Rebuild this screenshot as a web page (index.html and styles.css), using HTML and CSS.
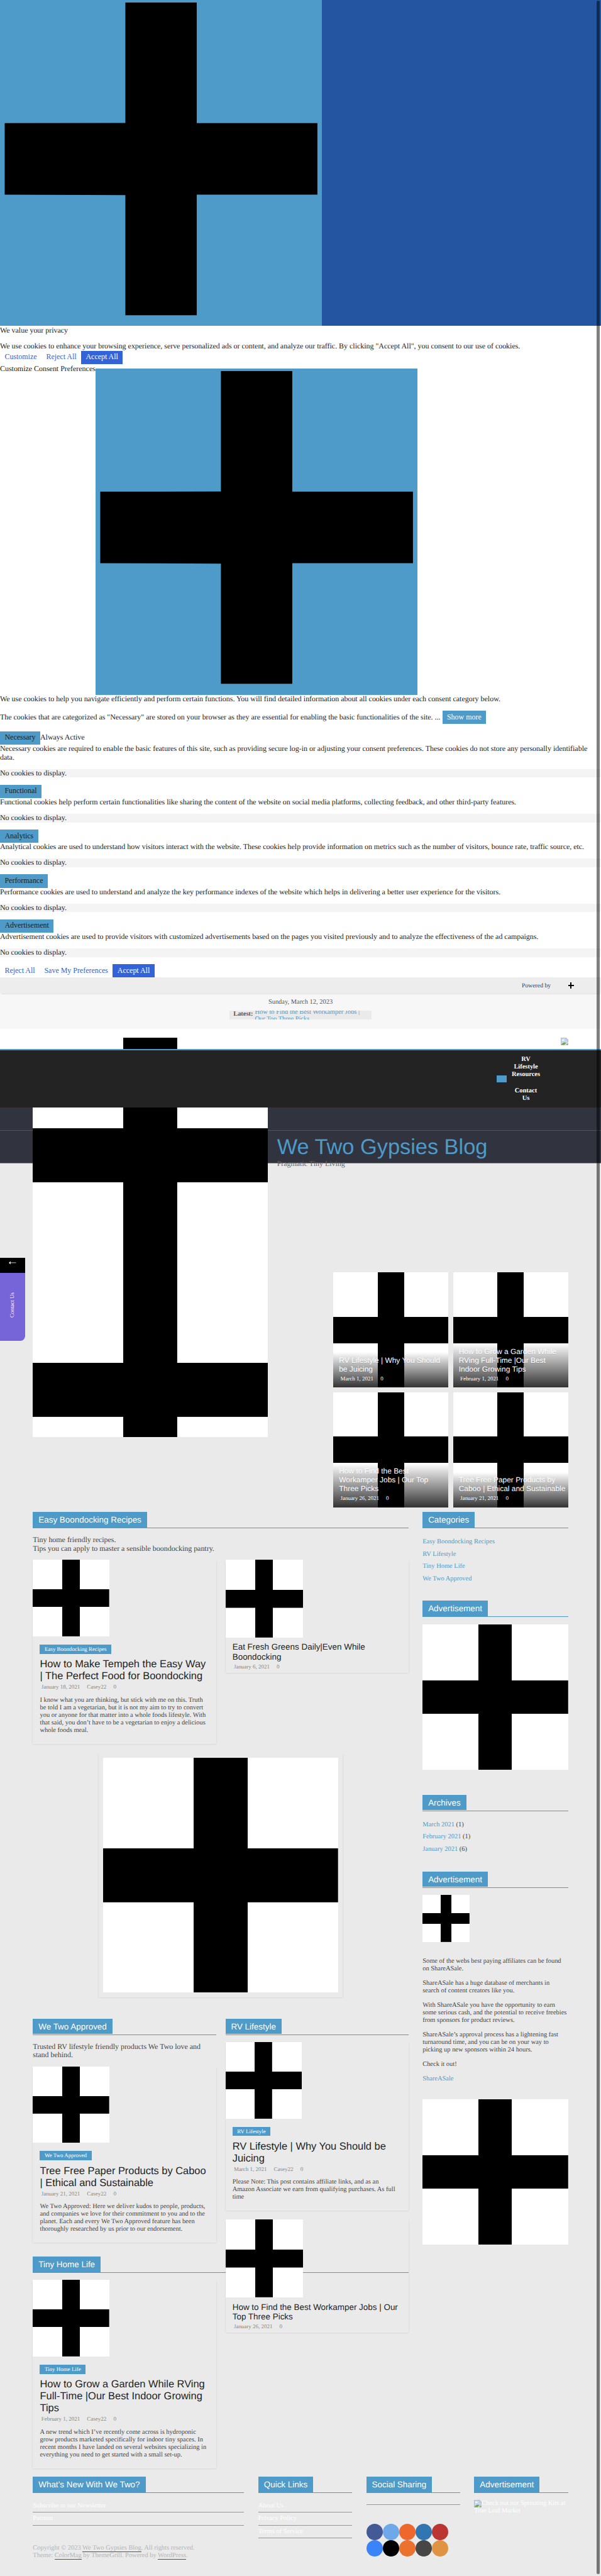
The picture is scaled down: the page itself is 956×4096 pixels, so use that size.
FILE: index.html
```html
<!DOCTYPE html>
<html lang="en">
<head>
<meta charset="utf-8">
<title>We Two Gypsies Blog</title>
<link rel="stylesheet" href="styles.css">
</head>
<body>
<svg width="0" height="0" class="defs">
  <symbol id="plus" viewBox="0 0 686 694"><path d="M267 5h152v257h257v152H419v257H267V415L10 414V262l257-.5z"/></symbol>
  <symbol id="broken" viewBox="0 0 16 16">
    <path d="M.5.5h11l4 4V9l-7 6.5h-8z" fill="#c6d6f5" stroke="#a9a9a9"/>
    <path d="M11.500.5v4h4z" fill="#fff" stroke="#a9a9a9"/>
    <path d="M2.500 6.300c0-2 1.500-1.800 2-2.300 1-1.200 2.400 0 2.300.8 1.200 0 1.200 1.500.2 1.500z" fill="#fff"/>
    <path d="M1 15c2-3.500 4.500-5 7-5 1.500 0 2.500.4 3.200 1L7.500 15z" fill="#6dac42"/>
    <path d="M15.500 11.500V15.500H11z" fill="#6dac42" stroke="#a9a9a9" stroke-width=".6"/>
  </symbol>
</svg>
<div class="page">
  <section class="revisit"><svg class="plus-tile"><use href="#plus"/></svg></section>

  <section class="consent">
    <p class="c-title">We value your privacy</p>
    <p class="c-intro">We use cookies to enhance your browsing experience, serve personalized ads or content, and analyze our traffic. By clicking "Accept All", you consent to our use of cookies.</p>
    <div class="btns"><button>Customize</button><button>Reject All</button><button class="solid">Accept All</button></div>
    <div class="pref-head"><span>Customize Consent Preferences</span><svg class="plus-tile"><use href="#plus"/></svg></div>
    <p class="c-line">We use cookies to help you navigate efficiently and perform certain functions. You will find detailed information about all cookies under each consent category below.</p>
    <div class="more"><span>The cookies that are categorized as "Necessary" are stored on your browser as they are essential for enabling the basic functionalities of the site. ... </span><button class="blue light">Show more</button></div>

    <div class="acc"><div class="acc-h"><button class="blue">Necessary</button><span>Always Active</span></div>
      <p>Necessary cookies are required to enable the basic features of this site, such as providing secure log-in or adjusting your consent preferences. These cookies do not store any personally identifiable<br>data.</p><div class="none">No cookies to display.</div></div>
    <div class="acc"><div class="acc-h"><button class="blue">Functional</button></div>
      <p>Functional cookies help perform certain functionalities like sharing the content of the website on social media platforms, collecting feedback, and other third-party features.</p><div class="none">No cookies to display.</div></div>
    <div class="acc"><div class="acc-h"><button class="blue">Analytics</button></div>
      <p>Analytical cookies are used to understand how visitors interact with the website. These cookies help provide information on metrics such as the number of visitors, bounce rate, traffic source, etc.</p><div class="none">No cookies to display.</div></div>
    <div class="acc"><div class="acc-h"><button class="blue">Performance</button></div>
      <p>Performance cookies are used to understand and analyze the key performance indexes of the website which helps in delivering a better user experience for the visitors.</p><div class="none">No cookies to display.</div></div>
    <div class="acc"><div class="acc-h"><button class="blue">Advertisement</button></div>
      <p>Advertisement cookies are used to provide visitors with customized advertisements based on the pages you visited previously and to analyze the effectiveness of the ad campaigns.</p><div class="none">No cookies to display.</div></div>
    <div class="btns"><button>Reject All</button><button>Save My Preferences</button><button class="solid">Accept All</button></div>
  </section>
  <div class="powered-wrap"><div class="powered"><span>Powered by</span><i class="mini-plus"></i></div></div>

  <div class="topbar">
    <div class="date">Sunday, March 12, 2023</div>
    <div class="latest"><strong>Latest:</strong><a>How to Find the Best Workamper Jobs |<br>Our Top Three Picks</a></div>
  </div>

  <header class="mast">
    <div class="mast-top"><svg class="broken"><use href="#broken"/></svg></div>
    <nav class="nav"><i class="nav-toggle"></i><ul><li>RV<br>Lifestyle<br>Resources</li><li>Contact<br>Us</li></ul></nav>
    <div class="brand"><h1>We Two Gypsies Blog</h1><p>Pragmatic Tiny Living</p></div>
    <div class="slides"></div>
  </header>

  <section class="featured">
    <article class="cross"><div class="over"><h3>RV Lifestyle | Why You Should<br>be Juicing</h3><div class="meta"><span>March 1, 2021</span><span>0</span></div></div></article>
    <article class="cross"><div class="over"><h3>How to Grow a Garden While<br>RVing Full-Time |Our Best<br>Indoor Growing Tips</h3><div class="meta"><span>February 1, 2021</span><span>0</span></div></div></article>
    <article class="cross"><div class="over"><h3>How to Find the Best<br>Workamper Jobs | Our Top<br>Three Picks</h3><div class="meta"><span>January 26, 2021</span><span>0</span></div></div></article>
    <article class="cross"><div class="over"><h3>Tree Free Paper Products by<br>Caboo | Ethical and Sustainable</h3><div class="meta"><span>January 21, 2021</span><span>0</span></div></div></article>
  </section>

  <div class="content">
    <main class="primary">
      <h2 class="wt"><span>Easy Boondocking Recipes</span></h2>
      <p class="desc">Tiny home friendly recipes.<br>Tips you can apply to master a sensible boondocking pantry.</p>
      <div class="pair">
        <article class="card"><div class="cross thumb"></div><div class="body"><span class="tag">Easy Boondocking Recipes</span>
          <h3>How to Make Tempeh the Easy Way<br>| The Perfect Food for Boondocking</h3><div class="meta"><span>January 18, 2021</span><span>Casey22</span><span>0</span></div>
          <p>I know what you are thinking, but stick with me on this. Truth<br>be told I am a vegetarian, but it is not my aim to try to convert<br>you or anyone for that matter into a whole foods lifestyle. With<br>that said, you don’t have to be a vegetarian to enjoy a delicious<br>whole foods meal.</p></div></article>
        <article class="card small"><div class="cross thumb"></div><div class="body"><h3>Eat Fresh Greens Daily|Even While<br>Boondocking</h3><div class="meta"><span>January 6, 2021</span><span>0</span></div></div></article>
      </div>
      <div class="banner"><div class="cross"></div></div>
      <div class="pair lower">
        <div class="col">
          <h2 class="wt"><span>We Two Approved</span></h2>
          <p class="desc">Trusted RV lifestyle friendly products We Two love and<br>stand behind.</p>
          <article class="card"><div class="cross thumb"></div><div class="body"><span class="tag">We Two Approved</span>
            <h3>Tree Free Paper Products by Caboo<br>| Ethical and Sustainable</h3><div class="meta"><span>January 21, 2021</span><span>Casey22</span><span>0</span></div>
            <p>We Two Approved: Here we deliver kudos to people, products,<br>and companies we love for their commitment to you and to the<br>planet. Each and every We Two Approved feature has been<br>thoroughly researched by us prior to our endorsement.</p></div></article>
          <h2 class="wt wide"><span>Tiny Home Life</span></h2>
          <article class="card"><div class="cross thumb"></div><div class="body"><span class="tag">Tiny Home Life</span>
            <h3>How to Grow a Garden While RVing<br>Full-Time |Our Best Indoor Growing<br>Tips</h3><div class="meta"><span>February 1, 2021</span><span>Casey22</span><span>0</span></div>
            <p>A new trend which I’ve recently come across is hydroponic<br>grow products marketed specifically for indoor tiny spaces. In<br>recent months I have landed on several websites specializing in<br>everything you need to get started with a small set-up.</p></div></article>
        </div>
        <div class="col above">
          <h2 class="wt"><span>RV Lifestyle</span></h2>
          <article class="card first"><div class="cross thumb"></div><div class="body"><span class="tag">RV Lifestyle</span>
            <h3>RV Lifestyle | Why You Should be<br>Juicing</h3><div class="meta"><span>March 1, 2021</span><span>Casey22</span><span>0</span></div>
            <p>Please Note: This post contains affiliate links, and as an<br>Amazon Associate we earn from qualifying purchases. As full<br>time</p></div></article>
          <article class="card small next"><div class="cross thumb"></div><div class="body"><h3>How to Find the Best Workamper Jobs | Our<br>Top Three Picks</h3><div class="meta"><span>January 26, 2021</span><span>0</span></div></div></article>
        </div>
      </div>
    </main>
    <aside class="side">
      <h2 class="wt"><span>Categories</span></h2>
      <ul class="links"><li><a>Easy Boondocking Recipes</a></li><li><a>RV Lifestyle</a></li><li><a>Tiny Home Life</a></li><li><a>We Two Approved</a></li></ul>
      <h2 class="wt"><span>Advertisement</span></h2>
      <div class="cross ad"></div>
      <h2 class="wt"><span>Archives</span></h2>
      <ul class="links"><li><a>March 2021</a> (1)</li><li><a>February 2021</a> (1)</li><li><a>January 2021</a> (6)</li></ul>
      <h2 class="wt"><span>Advertisement</span></h2>
      <div class="cross ad-sm"></div>
      <div class="copy">
        <p>Some of the webs best paying affiliates can be found<br>on ShareASale.</p>
        <p>ShareASale has a huge database of merchants in<br>search of content creators like you.</p>
        <p>With ShareASale you have the opportunity to earn<br>some serious cash, and the potential to receive freebies<br>from sponsors for product reviews.</p>
        <p>ShareASale’s approval process has a lightening fast<br>turnaround time, and you can be on your way to<br>picking up new sponsors within 24 hours.</p>
        <p>Check it out!</p>
        <p><a>ShareASale</a></p>
      </div>
      <div class="cross ad last"></div>
    </aside>
  </div>

  <footer class="foot">
    <div><h2 class="wt"><span>What’s New With We Two?</span></h2>
      <ul><li>Subscribe to our Newsletter</li><li>Patreon</li></ul>
      <p class="rights">Copyright © 2023 <a>We Two Gypsies Blog</a>. All rights reserved.<br>Theme: <a>ColorMag</a> by ThemeGrill. Powered by <a>WordPress</a>.</p></div>
    <div><h2 class="wt"><span>Quick Links</span></h2>
      <ul><li>About Us</li><li>Privacy Policy</li><li>Terms of Service</li></ul></div>
    <div><h2 class="wt"><span>Social Sharing</span></h2>
      <ul><li class="blank"></li></ul>
      <div class="dots"><i class="d1"></i><i class="d2"></i><i class="d3"></i><i class="d4"></i><i class="d5"></i><i class="d6"></i><i class="d7"></i><i class="d8"></i><i class="d9"></i><i class="d10"></i></div></div>
    <div><h2 class="wt"><span>Advertisement</span></h2>
      <p class="alt"><svg class="broken"><use href="#broken"/></svg>Check out our Sprouting Kits at<br>True Leaf Market</p></div>
  </footer>

  <div class="tab"><div class="tab-arrow"><svg viewBox="0 0 16 8"><path d="M0 4l4-3.500L3.500 3.500H15.500v1H3.500L4 7.500z" fill="#fff"/></svg></div><div class="tab-label"><span>Contact Us</span></div></div>
  <div class="scroll"></div>
</div>
</body>
</html>
```
FILE: styles.css
```css
* { box-sizing: border-box; }
html, body { margin: 0; background: #eaeaea; overflow: hidden; }
.defs { position: absolute; }
h1, h2, h3, p, ul { margin: 0; padding: 0; }
h1, h2, h3 { font-weight: normal; }
ul { list-style: none; }
svg { display: block; }
h1, h2, h3 { font-family: "Liberation Sans", Arial, sans-serif; }

.page {
  position: relative;
  width: 1280px;
  height: 5484px;
  zoom: .746875;
  overflow: hidden;
  background: #eaeaea;
  color: #444;
  font-family: "Liberation Serif", "Times New Roman", serif;
  font-size: 16px;
  white-space: nowrap;
  text-rendering: geometricPrecision;
}
a { color: #4e9ac8; }

/* placeholder tiles */
.cross {
  background:
    linear-gradient(#000 0 0) center / 23% 100% no-repeat,
    linear-gradient(#000 0 0) center / 100% 23% no-repeat,
    #fff;
}
.plus-tile { width: 686px; height: 694.5px; background: #4e9ac8; fill: #000; flex: none; }

/* cookie consent */
.revisit { height: 694px; overflow: hidden; background: #2355a0; }
.consent { height: 1387px; background: #fff; color: #212121; line-height: 18.4px; }
.c-title { padding-top: 1px; }
.c-intro { margin-top: 15px; }
.btns { display: flex; height: 28.4px; }
button { font: inherit; height: 28.4px; padding: 0 10px; margin: 0; border: 0; background: none; color: #3263d8; white-space: nowrap; }
.btns .solid { background: #3263d8; color: #fff; }
button.blue { background: #4e9ac8; color: #212121; }
button.light { color: #fff; }
.pref-head { display: flex; align-items: flex-start; height: 704px; }
.pref-head span { padding-top: 1px; }
.pref-head svg { margin-top: 9.5px; }
.c-line { padding-top: .5px; }
.more { display: flex; align-items: center; gap: 4px; margin-top: 15px; margin-bottom: 15.3px; height: 28.4px; }
.acc { padding-bottom: 15.3px; }
.acc-h { display: flex; align-items: center; }
.acc p { padding-bottom: 15px; }
.none { background: #f4f4f4; height: 18.4px; }
.powered-wrap { height: 36px; background: #f7f7f7; }
.powered { height: 36px; display: flex; align-items: center; justify-content: flex-end; gap: 37px; padding-right: 57px; background: #ededed; border-bottom: 1px solid #e2e2e2; border-radius: 0 0 6px 6px; font-size: 13px; color: #293c5b; }
.mini-plus { width: 13px; height: 13px; background: linear-gradient(#000 0 0) center / 3px 100% no-repeat, linear-gradient(#000 0 0) center / 100% 3px no-repeat; }

/* top strip */
.topbar { height: 73px; padding-top: 9px; background: #f7f7f7; font-size: 14px; color: #555; }
.date { text-align: center; line-height: 16px; }
.latest { display: flex; width: 302px; height: 20px; margin: 9px auto 0; padding-left: 8px; gap: 5px; overflow: hidden; background: #eaeaea; line-height: 15px; }
.latest strong { line-height: 17px; width: 41px; }
.latest a { margin-top: -3px; }

/* masthead */
.mast { position: relative; height: 519px; }
.mast-top { height: 44px; padding: 19px 70px 0 0; background: #fff; display: flex; justify-content: flex-end; }
.broken { width: 16px; height: 16px; }
.nav { position: relative; z-index: 2; display: flex; justify-content: flex-end; height: 124px; padding: 11px 129px 0 0; gap: 10px; border-top: 4px solid #4e9ac8; background: #232323; color: #fff; font-size: 14px; font-weight: bold; line-height: 16px; text-align: center; }
.nav ul { width: 62px; }
.nav li + li { margin-top: 20px; }
.nav-toggle { width: 21px; height: 14px; margin-top: 42px; background: #4e9ac8; }
.brand { height: 119px; padding: 57px 0 0 590px; background: linear-gradient(#5c5d67 0 0) 0 48px / 100% 1px no-repeat, #31333f; border-bottom: 1px solid #8e8686; }
.brand h1 { font-size: 46px; line-height: 54px; color: #4e9ac8; }
.brand p { line-height: 18px; color: #666; }
.slides { position: absolute; z-index: 1; left: 70px; top: 19px; width: 500px; height: 851px; background: linear-gradient(#000 0 0) center / 115px 100% no-repeat, linear-gradient(#000 0 0) 0 192.5px / 100% 115px no-repeat, linear-gradient(#000 0 0) 0 692.5px / 100% 115px no-repeat, #fff; }

/* featured grid */
.featured { display: grid; grid-template-columns: 245px 245px; grid-auto-rows: 245px; gap: 10px; padding-left: 710px; }
.featured article { display: flex; flex-direction: column; justify-content: flex-end; }
.over { padding: 9px 0 10px 12px; background: linear-gradient(transparent, rgba(0, 0, 0, .8)); color: #fff; }
.over h3 { font-size: 16px; line-height: 18.6px; text-shadow: 0 1px 0 rgba(0, 0, 0, .15); }
.meta { display: flex; gap: 15px; margin-top: 3px; padding-left: 3px; font-size: 12px; line-height: 16px; color: #888; }
.over .meta { color: #fff; }

/* widget titles */
.wt { height: 35px; border-bottom: 2px solid #4e9ac8; font-size: 18px; line-height: 34px; color: #fff; }
.wt span { display: inline-block; height: 33px; padding: 0 12px; background: #4e9ac8; }

/* columns */
.content { display: flex; gap: 30px; height: 2053.5px; margin-top: 10px; padding-left: 70px; align-items: flex-start; }
.primary { width: 800px; }
.side { width: 310px; font-size: 14px; }
.desc { margin-top: 16px; line-height: 18.4px; height: 51px; }
.pair { display: grid; grid-template-columns: 390px 390px; gap: 20px; align-items: start; }
.card { width: 390px; box-shadow: 0 1px 3px rgba(0, 0, 0, .12); }
.thumb { width: 162.5px; height: 163px; }
.small .thumb { width: 165.5px; height: 165.5px; }
.body { padding: 17.3px 0 20.2px 15px; font-size: 14px; line-height: 16px; }
.tag { display: block; width: max-content; height: 20px; padding: 0 10px; background: #4e9ac8; color: #fff; font-size: 12px; line-height: 20px; }
.body h3 { margin-top: 10px; font-size: 22px; line-height: 25.3px; color: #232323; }
.body p { margin-top: 11.3px; }
.small .body { padding: 10px 0 5px 15px; }
.small .body h3 { margin-top: 0; font-size: 18px; line-height: 20.7px; }
.banner { width: 520px; height: 520.5px; margin: 20px 0 44.5px 140px; padding: 10px; box-shadow: 0 1px 3px rgba(0, 0, 0, .12); }
.banner .cross { height: 500px; }
.wide { width: 800px; margin: 29.5px 0 15px; }
.above { position: relative; z-index: 1; }
.first { margin-top: 15px; }
.next { margin-top: 19px; }
.links { margin: 16px 0 34px; line-height: 26px; }
.ad { height: 310px; margin: 15px 0 53px; }
.ad-sm { width: 100px; height: 100px; margin-top: 15px; }
.copy { padding-top: 34px; line-height: 16px; }
.copy p { margin-bottom: 15px; }
.ad.last { margin-top: 34px; margin-bottom: 0; }

/* footer */
.foot { display: grid; grid-template-columns: 450px 200px 200px 200px; gap: 30px; padding-left: 70px; font-size: 14px; color: #fff; }
.foot ul { margin-top: 15px; line-height: 26px; }
.foot li { height: 27px; border-bottom: 2px solid #969696; margin: 0; }
.foot .blank { height: 11px; }
.rights { margin-top: 41px; line-height: 16.2px; color: #b1b6b6; }
.rights a { color: inherit; border-bottom: 1px solid #555; }
.dots { display: grid; grid-template-columns: repeat(5, 35px); grid-auto-rows: 35px; margin-top: 39.5px; }
.dots i { border-radius: 50%; }
.d1 { background: #435a97; } .d2 { background: #6da9e8; } .d3 { background: #ee672d; } .d4 { background: #3176b1; } .d5 { background: #bb3632; }
.d6 { background: #3a83f8; } .d7 { background: #000; } .d8 { background: #eb712e; } .d9 { background: #464646; } .d10 { background: #e09443; }
.alt { margin-top: 15px; line-height: 16px; }
.alt svg { display: inline-block; vertical-align: top; }

/* floating widgets */
.tab { position: absolute; z-index: 3; left: 0; top: 2678px; width: 53px; height: 176px; border-bottom-right-radius: 10px; overflow: hidden; background: #7664d9; }
.tab-arrow { height: 32px; padding: 7px 0 0 19px; background: #000; }
.tab-arrow svg { width: 16px; height: 8px; }
.tab-label { height: 144px; display: flex; align-items: center; justify-content: center; padding-bottom: 7px; padding-right: 2px; }
.tab-label span { writing-mode: vertical-rl; transform: rotate(180deg); font-size: 12px; color: #fff; }
.scroll { position: absolute; z-index: 4; left: 1271px; top: 2px; width: 7px; height: 5478px; border-radius: 4px; background: rgba(0, 0, 0, .5); }
```
